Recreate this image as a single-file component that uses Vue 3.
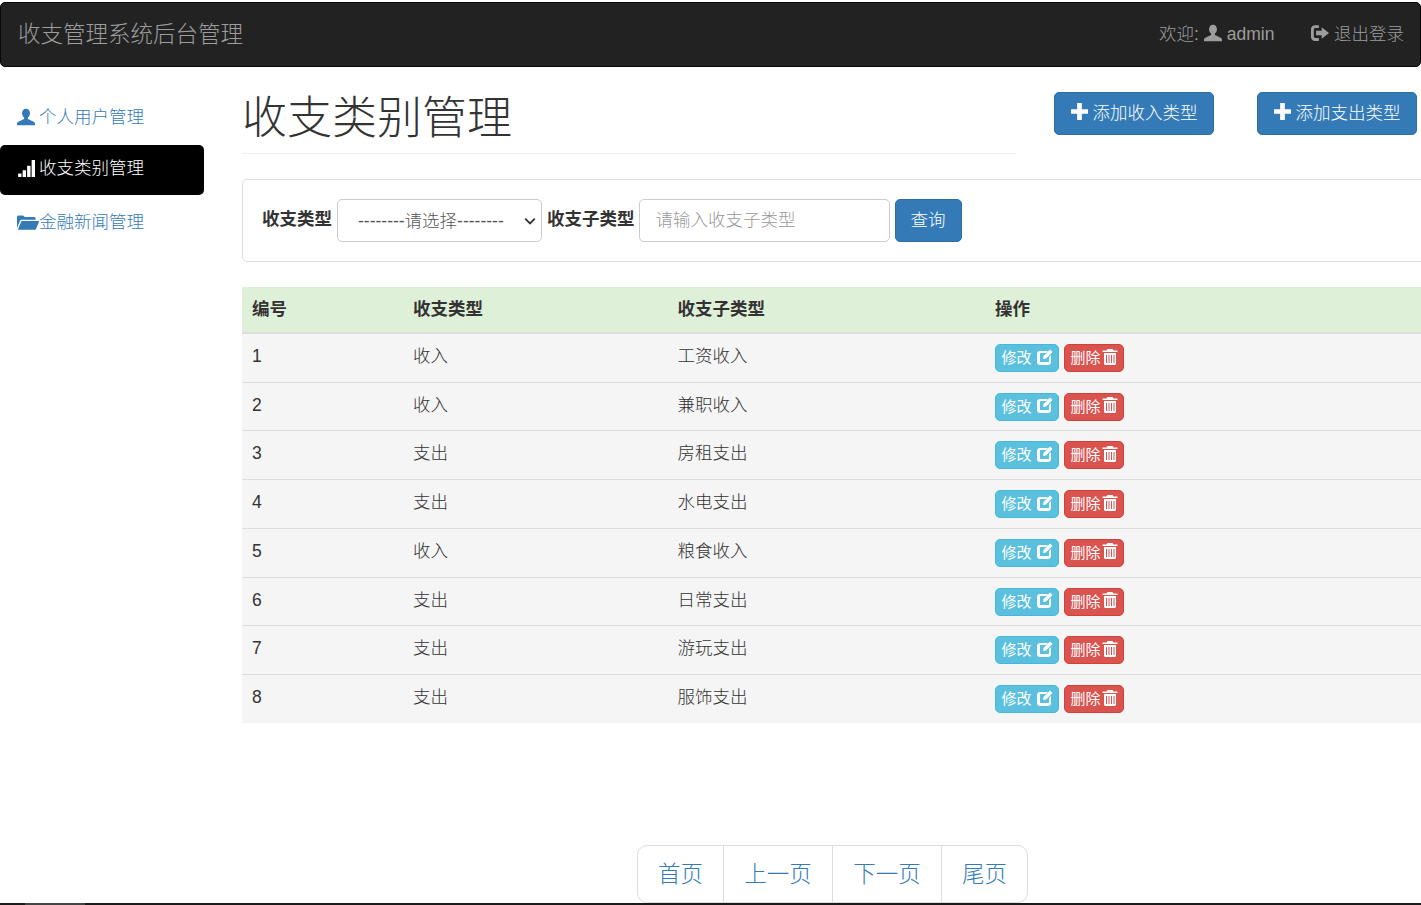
<script setup>
const rows = [
  [1, '收入', '工资收入'],
  [2, '收入', '兼职收入'],
  [3, '支出', '房租支出'],
  [4, '支出', '水电支出'],
  [5, '收入', '粮食收入'],
  [6, '支出', '日常支出'],
  [7, '支出', '游玩支出'],
  [8, '支出', '服饰支出'],
]
const user = 'M8 1.2c-2 0-3.300 1.600-3.300 3.700 0 1.500.7 2.900 1.700 3.600v1.200L1.600 12c-.8.4-1.100 1-1.100 1.800V15h15v-1.200c0-.8-.3-1.400-1.100-1.800l-4.800-2.300V8.500c1-.7 1.700-2.100 1.700-3.600 0-2.100-1.300-3.700-3.300-3.700z'
</script>

<template>
  <div class="page">
    <nav class="navbar">
      <span class="brand">收支管理系统后台管理</span>
      <div class="nav-right">
        <span class="welcome">欢迎:
          <svg class="i-user" viewBox="0.5 1.2 15 13.800"><path :d="user" /></svg>
          admin</span>
        <span class="logout">
          <svg class="i-out" viewBox="0 0 16 16">
            <path d="M7 1H3.500C1.500 1 0 2.500 0 4.500v7C0 13.500 1.500 15 3.500 15H7v-2.500H3.800c-.8 0-1.300-.5-1.300-1.300V4.800c0-.8.500-1.300 1.300-1.300H7z" />
            <path d="M9.500 2.800 16 8l-6.500 5.200V10H4.500V6h5z" />
          </svg>退出登录</span>
      </div>
    </nav>

    <div class="body">
      <aside class="sidebar">
        <a class="pill first">
          <svg class="i-side" viewBox="0.5 1.2 15 13.800"><path :d="user" /></svg>个人用户管理
        </a>
        <a class="pill active">
          <svg class="i-side" viewBox="0 0 16 16">
            <path d="M1 12h3v3H1zM5 9h3v6H5zM9 5h3v10H9zM13 0h3v15h-3z" />
          </svg>收支类别管理
        </a>
        <a class="pill last">
          <svg class="i-side wide" viewBox="0 0 20 16">
            <path d="M0 3.500C0 2.700.6 2 1.400 2h4.200l1.400 1.500h8.500c.8 0 1.400.6 1.400 1.400V6H4.500c-.8 0-1.500.4-1.800 1.200L0 13.500z" />
            <path d="M4 7h15.500c.4 0 .6.300.5.700l-2.600 6.500c-.2.500-.6.800-1.100.8H.8z" />
          </svg>金融新闻管理
        </a>
      </aside>

      <main class="main">
        <div class="head">
          <h1 class="title">收支类别管理</h1>
          <div class="head-btns">
            <button class="btn primary add">
              <svg class="i-plus" viewBox="0 0 16 16"><path d="M5.800 0h4.400v5.800H16v4.400h-5.800V16H5.800v-5.800H0V5.800h5.800z" /></svg>添加收入类型
            </button>
            <button class="btn primary add">
              <svg class="i-plus" viewBox="0 0 16 16"><path d="M5.800 0h4.400v5.800H16v4.400h-5.800V16H5.800v-5.800H0V5.800h5.800z" /></svg>添加支出类型
            </button>
          </div>
        </div>

        <form class="search" @submit.prevent>
          <label class="lbl">收支类型</label>
          <select class="field sel">
            <option>--------请选择--------</option>
          </select>
          <label class="lbl sub">收支子类型</label>
          <input class="field inp" placeholder="请输入收支子类型" />
          <button class="btn primary query">查询</button>
        </form>

        <table class="tbl">
          <thead>
            <tr>
              <th class="c1">编号</th>
              <th class="c2">收支类型</th>
              <th class="c3">收支子类型</th>
              <th>操作</th>
            </tr>
          </thead>
          <tbody>
            <tr v-for="r in rows" :key="r[0]">
              <td><span class="cell">{{ r[0] }}</span></td>
              <td><span class="cell">{{ r[1] }}</span></td>
              <td><span class="cell">{{ r[2] }}</span></td>
              <td>
                <div class="ops">
                  <button class="btn xs info">修改
                    <svg class="i-edit" viewBox="0 0 16 16">
                      <path d="M3 2h8L9 4H3.500C3.200 4 3 4.200 3 4.500v8c0 .3.200.5.500.5h8c.3 0 .5-.2.500-.5V8l2-2v7c0 1.700-1.300 3-3 3H3c-1.700 0-3-1.300-3-3V5c0-1.700 1.300-3 3-3z" />
                      <path d="M13 .5l2.500 2.500L9 9.500l-3 .5.500-3z" />
                    </svg>
                  </button>
                  <button class="btn xs danger">删除
                    <svg class="i-trash" viewBox="0 0 16 16">
                      <path d="M5.500 0h5l1 1.500H15.500V3H.5V1.500h4zM2 4h12v10.500c0 .8-.7 1.500-1.500 1.500h-9C2.700 16 2 15.300 2 14.500zM4 6v8h1V6zm2.500 0v8h1V6zm2.500 0v8h1V6zm2.500 0v8h1V6z" fill-rule="evenodd" />
                    </svg>
                  </button>
                </div>
              </td>
            </tr>
          </tbody>
        </table>

        <div class="pager-wrap">
          <ul class="pager">
            <li>首页</li>
            <li>上一页</li>
            <li>下一页</li>
            <li>尾页</li>
          </ul>
        </div>
      </main>
    </div>
    <div class="scroll"><span class="thumb"></span></div>
  </div>
</template>

<style>
html, body { margin: 0; overflow: hidden; background: #fff; }
</style>

<style scoped>
.page {
  height: 905px;
  overflow: hidden;
  position: relative;
  padding-top: 2px;
  box-sizing: border-box;
  font-family: "Liberation Sans", "Noto Sans CJK SC", sans-serif;
  font-size: 17.5px;
  font-weight: 300;
  line-height: 1.43;
  color: #333;
  background: #fff;
}
svg { fill: currentColor; flex: none; }
.navbar {
  height: 65px;
  box-sizing: border-box;
  background: #222;
  border: 1px solid #080808;
  border-radius: 5px;
  display: flex;
  align-items: center;
  justify-content: space-between;
  padding: 0 16px 0 17px;
  color: #9d9d9d;
}
.brand { font-size: 22.5px; padding-top: 2px; }
.nav-right { display: flex; align-items: center; gap: 36.500px; }
.welcome, .logout { display: flex; align-items: center; }
.i-user { width: 18px; height: 18px; margin: 0 5px 3px; }
.i-out { width: 18px; height: 18px; margin: 0 5px 2px 0; }
.body { display: flex; }
.sidebar {
  width: 204px;
  flex: none;
  padding-top: 25px;
  display: flex;
  flex-direction: column;
  gap: 3px;
  margin-right: 38px;
}
.pill {
  height: 50px;
  box-sizing: border-box;
  display: flex;
  align-items: center;
  padding: 0 0 2px 17px;
  color: #337ab7;
  border-radius: 5px;
}
.pill.first { padding: 2px 0 0 17px; }
.pill.first .i-side { margin-bottom: 3px; }
.pill.last { padding-bottom: 1.500px; }
.pill.active { background: #000; color: #fff; }
.i-side { width: 18px; height: 18px; margin-right: 4px; }
.i-side.wide { width: 22px; margin-right: 0; }
.main { width: 1300px; flex: none; }
.head { display: flex; height: 112px; }
.title {
  width: 774px;
  height: 87px;
  box-sizing: border-box;
  margin: 0;
  padding-top: 27px;
  font-size: 45px;
  line-height: 49.5px;
  font-weight: 300;
  border-bottom: 1px solid #eee;
}
.head-btns { display: flex; gap: 43px; margin: 25px 0 0 38px; }
.btn {
  font-family: inherit;
  font-weight: 300;
  border: 1px solid transparent;
  border-radius: 5px;
  color: #fff;
  display: inline-flex;
  align-items: center;
  justify-content: center;
  padding: 0;
}
.primary { background: #337ab7; border-color: #2e6da4; }
.add { width: 160px; height: 43px; font-size: 17.5px; padding-bottom: 5px; }
.i-plus { width: 17px; height: 17px; margin-right: 5px; }
.search {
  height: 83px;
  box-sizing: border-box;
  border: 1px solid #ddd;
  border-radius: 5px;
  display: flex;
  align-items: center;
  padding-left: 19px;
}
.lbl { font-weight: 700; margin-right: 5px; padding-bottom: 2px; }
.lbl.sub { margin-right: 4px; }
.field {
  height: 43px;
  box-sizing: border-box;
  border: 1px solid #ccc;
  border-radius: 5px;
  background: #fff;
  color: #555;
  font-family: inherit;
  font-size: 17.5px;
  font-weight: 300;
  margin-right: 5px;
}
.sel {
  width: 205px;
  padding: 0 20px;
  appearance: none;
  background-image: url("data:image/svg+xml,%3Csvg xmlns='http://www.w3.org/2000/svg' viewBox='0 0 10 6'%3E%3Cpath d='M1 1l4 4 4-4' fill='none' stroke='%23333' stroke-width='1.500'/%3E%3C/svg%3E");
  background-repeat: no-repeat;
  background-position: right 5px center;
  background-size: 12px 8px;
}
.inp { width: 251px; padding: 0 16px; }
.inp::placeholder { color: #999; }
.query { width: 67px; height: 43px; font-size: 17.5px; padding-bottom: 4px; }
.tbl {
  margin-top: 25px;
  width: 100%;
  border-collapse: collapse;
  table-layout: fixed;
}
.tbl th {
  background: #dff0d8;
  text-align: left;
  height: 46.400px;
  box-sizing: border-box;
  padding: 0 10px;
  border-bottom: 2px solid #ddd;
  font-weight: 700;
}
.tbl td {
  background: #f5f5f5;
  height: 48.750px;
  box-sizing: border-box;
  padding: 0 10px;
  border-top: 1px solid #ddd;
}
.tbl tr:first-child td { border-top: 0; }
.cell { display: block; margin-top: -3px; }
.c1 { width: 161px; }
.c2 { width: 264.500px; }
.c3 { width: 317.500px; }
.ops { display: flex; gap: 5px; }
.xs { height: 28px; font-size: 15px; font-weight: 400; padding-bottom: 3px; }
.info { width: 64px; background: #5bc0de; border-color: #46b8da; }
.danger { width: 60px; background: #d9534f; border-color: #d43f3a; }
.i-edit { width: 16px; height: 16px; margin-left: 5px; }
.i-trash { width: 16px; height: 16px; margin-left: 1px; }
.pager-wrap { margin-top: 122px; width: 1181px; display: flex; justify-content: center; }
.pager {
  display: flex;
  list-style: none;
  margin: 0;
  padding: 0;
  height: 58px;
  box-sizing: border-box;
  border: 1px solid #ddd;
  border-radius: 10px;
  color: #337ab7;
  font-size: 22.5px;
}
.pager li {
  display: flex;
  align-items: center;
  padding: 1px 20.150px 0;
  border-left: 1px solid #ddd;
}
.pager li:first-child { border-left: 0; }
.scroll { position: absolute; left: 0; right: 0; bottom: 0; height: 2px; background: #1a1a1a; }
.thumb { position: absolute; left: 25px; width: 60px; height: 2px; background: #444; }
</style>
